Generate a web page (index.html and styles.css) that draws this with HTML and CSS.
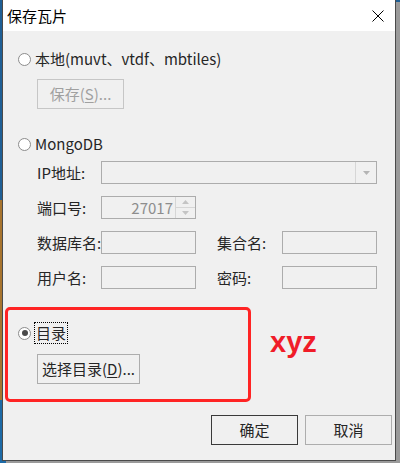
FILE: index.html
```html
<!DOCTYPE html>
<html lang="zh-CN">
<head>
<meta charset="utf-8">
<title>保存瓦片</title>
<link rel="stylesheet" href="styles.css">
</head>
<body>
<div class="window">
  <div class="titlebar">
    <span class="title">保存瓦片</span>
    <svg class="close" width="12" height="12" viewBox="0 0 12 12"><path d="M0.5 0.5 L11.5 11.5 M11.5 0.5 L0.5 11.5" stroke="#000" stroke-width="1" fill="none"/></svg>
  </div>
  <div class="content">
    <div class="radio-row"><span class="radio"></span><span>本地(muvt、vtdf、mbtiles)</span></div>
    <div class="btn btn-disabled btn-save">保存(<u>S</u>)...</div>

    <div class="radio-row row-mongo"><span class="radio"></span><span>MongoDB</span></div>
    <div class="grid">
      <span class="lbl">IP地址:</span>
      <div class="field combo"><span class="combo-btn"><svg width="7" height="4" viewBox="0 0 7 4"><path d="M0 0 H7 L3.5 4 Z" fill="#b4b4b4"/></svg></span></div>

      <span class="lbl">端口号:</span>
      <div class="field spin"><span class="spin-val">27017</span><span class="spin-btns"><span class="spin-up"><svg width="7" height="4" viewBox="0 0 7 4"><path d="M0 4 H7 L3.5 0 Z" fill="#c4c4c4"/></svg></span><span class="spin-down"><svg width="7" height="4" viewBox="0 0 7 4"><path d="M0 0 H7 L3.5 4 Z" fill="#c4c4c4"/></svg></span></span></div>
      <span></span><span></span><span></span>

      <span class="lbl">数据库名:</span>
      <div class="field"></div>
      <span></span>
      <span class="lbl">集合名:</span>
      <div class="field"></div>

      <span class="lbl">用户名:</span>
      <div class="field"></div>
      <span></span>
      <span class="lbl">密码:</span>
      <div class="field"></div>
    </div>

    <div class="radio-row row-dir"><span class="radio checked"></span><span class="focus">目录</span></div>
    <div class="btn btn-dir">选择目录(<u>D</u>)...</div>

    <div class="actions">
      <div class="btn btn-default">确定</div>
      <div class="btn btn-cancel">取消</div>
    </div>
  </div>
  <div class="annot"></div>
  <div class="xyz">xyz</div>
</div>
</body>
</html>
```

FILE: styles.css
```css
* { box-sizing: border-box; }
html, body {
  margin: 0;
  padding: 0;
  width: 400px;
  height: 463px;
  overflow: hidden;
}
body {
  background: linear-gradient(to bottom, #1f5f95 0, #1f5f95 200px, #a7742e 200px, #a7742e 400px, #1d6aa6 400px);
  font-family: "Noto Sans CJK SC", "Noto Sans", sans-serif;
  font-size: 15px;
  color: #262626;
}
.window {
  position: relative;
  margin-left: 2px;
  width: 394px;
  height: 461px;
  background: #f0f0f0;
  border: 1px solid #4a4a4a;
  border-top: none;
  box-shadow: 4px 2px 0 #9a9a9a;
}
.titlebar {
  height: 31px;
  background: #ffffff;
  display: flex;
  align-items: center;
  justify-content: space-between;
  padding: 0 11px 0 4px;
}
.title {
  font-size: 15px;
  line-height: 20px;
  color: #000;
}
.close { display: block; margin-top: 1px; }
.content {
  padding: 18px 3px 0 15px;
}
.radio-row {
  display: flex;
  align-items: center;
  gap: 4px;
  height: 20px;
  line-height: 20px;
  white-space: nowrap;
}
.radio {
  width: 13px;
  height: 13px;
  border: 1px solid #8c8c8c;
  border-radius: 50%;
  background: #fff;
  position: relative;
  flex: none;
}
.radio.checked::after {
  content: "";
  position: absolute;
  left: 2.5px;
  top: 2.5px;
  width: 6px;
  height: 6px;
  border-radius: 50%;
  background: #4a4a4a;
}
.btn {
  height: 30px;
  width: 87px;
  border: 1px solid #adadad;
  background: #f0f0f0;
  display: flex;
  align-items: center;
  justify-content: center;
  line-height: 20px;
  white-space: nowrap;
}
.btn u { text-decoration-thickness: 1px; text-underline-offset: 2px; }
.btn-save {
  margin: 10px 0 0 19px;
  color: #a0a0a0;
  border-color: #c6c6c6;
}
.row-mongo { margin-top: 25px; }
.grid {
  margin: 7px 0 0 19px;
  display: grid;
  grid-template-columns: 64px 95px 21px 65px 95px;
  grid-auto-rows: 23px;
  row-gap: 12px;
}
.lbl {
  line-height: 23px;
  white-space: nowrap;
  min-width: 0;
}
.field {
  height: 23px;
  border: 1px solid #acacac;
  background: #f0f0f0;
}
.combo {
  grid-column: 2 / 6;
  display: flex;
  justify-content: flex-end;
}
.combo-btn {
  width: 21px;
  border-left: 1px solid #d6d6d6;
  display: flex;
  align-items: center;
  justify-content: center;
}
.spin {
  display: flex;
  align-items: stretch;
}
.spin-val {
  flex: 1;
  text-align: right;
  line-height: 21px;
  color: #8d8d8d;
  padding-right: 2px;
}
.spin-btns {
  width: 20px;
  border-left: 1px solid #d6d6d6;
  display: flex;
  flex-direction: column;
}
.spin-up, .spin-down {
  flex: 1;
  display: flex;
  align-items: center;
  justify-content: center;
}
.spin-up { border-bottom: 1px solid #d6d6d6; }
.row-dir { margin-top: 34px; }
.focus {
  outline: 1px dotted #000;
  outline-offset: 0;
  padding: 0 1px;
  line-height: 20px;
}
.btn-dir {
  margin: 11px 0 0 19px;
  width: 103px;
}
.actions {
  margin-top: 31px;
  display: flex;
  justify-content: flex-end;
  gap: 7px;
}
.btn-default { border-color: #3a3a3a; }
.annot {
  position: absolute;
  left: 2px;
  top: 307px;
  width: 246px;
  height: 95px;
  border: 3px solid #ff2424;
  border-radius: 5px;
}
.xyz {
  position: absolute;
  left: 267px;
  top: 328px;
  font-family: "Liberation Sans", Arial, sans-serif;
  font-weight: bold;
  font-size: 29px;
  line-height: 1;
  color: #f01c28;
}
```
